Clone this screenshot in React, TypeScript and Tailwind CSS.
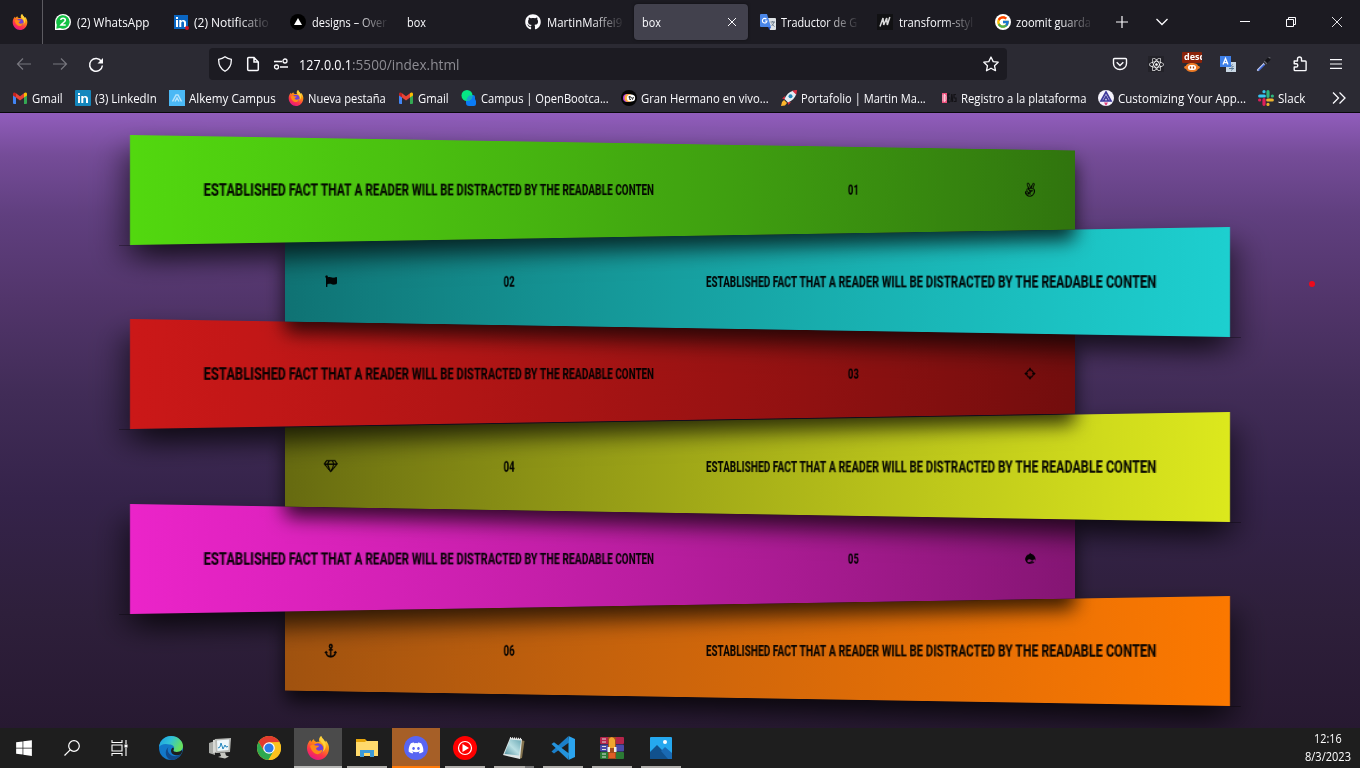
import { useLayoutEffect, useRef, useState, type ReactNode } from "react";
import { FaAnchor, FaAngellist, FaDiscord, FaDrupal, FaFlag, FaGithub, FaReact, FaRegGem, FaWindows } from "react-icons/fa";
import { FcGoogle } from "react-icons/fc";

/* Text squeezed or stretched horizontally to an exact width. */
function Fit({ w, className = "", children }: { w: number; className?: string; children: ReactNode }) {
  const ref = useRef<HTMLSpanElement>(null);
  const [scale, setScale] = useState(1);
  useLayoutEffect(() => {
    if (ref.current && ref.current.offsetWidth) {
      setScale(w / ref.current.offsetWidth);
    }
  }, [w]);
  return (
    <span className="block shrink-0 whitespace-nowrap" style={{ width: w }}>
      <span ref={ref} className={`inline-block origin-left ${className}`} style={{ transform: `scaleX(${scale})` }}>
        {children}
      </span>
    </span>
  );
}

function Firefox({ className = "size-4" }: { className?: string }) {
  return (
    <svg viewBox="0 0 24 24" className={`shrink-0 ${className}`}>
      <defs>
        <linearGradient id="ffx" x1="0.8" y1="0" x2="0.3" y2="1">
          <stop offset="0" stopColor="#fff44f" />
          <stop offset="0.35" stopColor="#ff980e" />
          <stop offset="0.7" stopColor="#ff3647" />
          <stop offset="1" stopColor="#e31587" />
        </linearGradient>
      </defs>
      <path fill="url(#ffx)" d="M1 12C1 8 3 5 4.500 4l.6 2C6 4.500 7 3.500 8 3.200 8 4.500 9 5.500 10.500 6c1-.2 2-.2 3 0C12.500 4 13 1.500 15.200 0c0 2.500 2 3.500 4 6l.7-1.500C22 7 23.300 10 23 13c-.5 6.500-5.500 11-11 11S1 19 1 12z" />
      <circle cx="12" cy="12.500" r="5.300" fill="#7141d8" />
      <path fill="#ff8a16" d="M4 10c2-2 4-1.500 5.500-.5l3.500.3c0 1.500-2.500 1.500-3 2.700.5 2.500 4 2.800 6.500 1C16 18 12 19 9 17.500 6 16 5 13 4 10z" />
      <path fill="#ffd23c" d="M15.200 0c-2 2-1.200 5 .8 7 2.500 2.500 2.500 6 .5 9 4.500-3 4-9 1.200-12.500C16.500 2 15.300 1 15.200 0z" />
    </svg>
  );
}

function Gmail() {
  return (
    <svg viewBox="0 0 16 16" className="size-4 shrink-0">
      <path fill="#4285f4" d="M1 4l3 2v8H2a1 1 0 0 1-1-1z" />
      <path fill="#34a853" d="M12 6l3-2v9a1 1 0 0 1-1 1h-2z" />
      <path fill="#ea4335" d="M4 3.200l4 3 4-3v4.300l-4 3-4-3z" />
      <path fill="#c5221f" d="M1 4c0-1.500 1.700-2 3-.8v4.300L1 5.400z" />
      <path fill="#fbbc04" d="M12 3.200C13.300 2 15 2.500 15 4v1.400l-3 2.100z" />
    </svg>
  );
}

function LinkedIn({ dot = false }: { dot?: boolean }) {
  return (
    <svg viewBox="0 0 16 16" className="size-4 shrink-0">
      <rect x={dot ? 1 : 0} y={dot ? 1 : 0} width={dot ? 14 : 16} height={dot ? 14 : 16} rx={dot ? 0 : 1} fill={dot ? "#0a66c2" : "#1487bd"} />
      <path fill="#fff" d="M3 6h2v7H3zM3 3h2v2H3zM6.300 6h2v1c1-1.600 4.700-1.700 4.700 1.700V13h-2V9c0-2-2.700-2-2.700 0v4h-2z" />
      {dot && <circle cx="14" cy="14" r="2" fill="#d11124" />}
    </svg>
  );
}

function WhatsApp() {
  return (
    <svg viewBox="0 0 16 16" className="size-4 shrink-0">
      <path fill="#fff" d="M0 16V8a8 8 0 1 1 8 8z" />
      <path fill="#12c143" d="M1.300 14.700l.5-4A6.700 6.700 0 1 1 5 14z" />
      <path fill="none" stroke="#fff" strokeWidth="1.600" d="M5.700 6c.3-2.300 4.600-2.300 4.600.2 0 1.600-2.800 2.700-4.300 4.800h4.700" />
    </svg>
  );
}

function Vercel() {
  return (
    <svg viewBox="0 0 16 16" className="size-4 shrink-0">
      <circle cx="8" cy="8" r="8" fill="#000" />
      <path d="M8 4l4 7H4z" fill="#fff" />
    </svg>
  );
}

function Translate() {
  return (
    <svg viewBox="0 0 16 16" className="size-4 shrink-0">
      <path fill="#dfe3e7" d="M7 4h8a1 1 0 0 1 1 1v10a1 1 0 0 1-1 1H10z" />
      <path fill="#4a86e8" d="M1 0h6l4 13H1a1 1 0 0 1-1-1V1a1 1 0 0 1 1-1z" />
      <path fill="#2a56c6" d="M8 13h3l-1.500 3z" />
      <path fill="none" stroke="#fff" strokeWidth="1.100" d="M6.500 5.200A2.300 2.300 0 1 0 7 7H5" />
      <path fill="none" stroke="#6b7b8a" d="M10.500 8H15M12.700 7v1M14 8c-.5 2-1.500 3-2.500 4M11.800 9.500c.8 1.500 1.700 2 2.700 3" />
    </svg>
  );
}

function Mdn() {
  return (
    <svg viewBox="0 0 16 16" className="size-4 shrink-0">
      <rect width="16" height="16" fill="#111113" />
      <path d="M3 12.500l3-8.500.7 7 3-7 .6 7 2.500-8" fill="none" stroke="#d8d8d8" strokeWidth="1.500" />
    </svg>
  );
}

function Alkemy() {
  return (
    <svg viewBox="0 0 16 16" className="size-4 shrink-0">
      <rect width="16" height="16" fill="#4bb8f5" />
      <path d="M3.500 11.500L7 5h2l3.500 6.500M6 11.500L8 8l2 3.500" fill="none" stroke="#b5e3fc" strokeWidth="1.500" />
    </svg>
  );
}

function OpenBootcamp() {
  return (
    <svg viewBox="0 0 16 16" className="size-4 shrink-0">
      <path fill="#0b7bf5" d="M8 5h4a2 2 0 0 1 2 2v2l1 2v3a2 2 0 0 1-2 2H8a3 3 0 0 1-3-3V9z" />
      <circle cx="6" cy="5.500" r="5.500" fill="#06e584" />
      <path fill="#1aa5c5" d="M5.500 9L8 5.500h3.500A5.500 5.500 0 0 1 6 11z" />
    </svg>
  );
}

function GranHermano() {
  return (
    <svg viewBox="0 0 16 16" className="size-4 shrink-0">
      <circle cx="8" cy="8" r="8" fill="#050505" />
      <circle cx="6" cy="8" r="4" fill="#b33fe0" />
      <circle cx="7.500" cy="8" r="4" fill="#ffb03a" />
      <ellipse cx="10" cy="8" rx="4.200" ry="3.500" fill="#fff" />
      <path d="M7.500 7h2.500M8.700 6v3.500h1.300M10.500 7l1 2.500 1-2.500" fill="none" stroke="#222" strokeWidth=".9" />
    </svg>
  );
}

function Rocket() {
  return (
    <svg viewBox="0 0 16 16" className="size-4 shrink-0">
      <path fill="#d42b3c" d="M4 6L1 8.500l3 1zM10 12l-2.500 3-1-3zM11 .800L16 0l-1 5z" />
      <path fill="#e4edf4" d="M3.500 9C5 5 8 1.800 12 .700L15.300 4C14 8 11 11 7 12.500z" />
      <path fill="#dc3146" d="M11.500.900L16 0l-1 4.500z" />
      <circle cx="9.500" cy="6.300" r="2" fill="#2487b8" />
      <path fill="#ffb62b" d="M3 10l3 3-2 2.500L0 16l1-4z" />
    </svg>
  );
}

function Ideas() {
  return (
    <svg viewBox="0 0 16 16" className="size-4 shrink-0">
      <rect x="1" y="3" width="5" height="10" fill="#ec4e7b" />
      <path d="M2 4.500v7M4 4.500h-.500v7c2 0 2-7 0-7" stroke="#fff" strokeWidth=".7" fill="none" />
      <path d="M9 4H7v8h2M7 8h2M10 12l.8-8 1 8M15 4.500h-2V8h2v3.500h-2" stroke="#131216" strokeWidth="1.200" fill="none" />
    </svg>
  );
}

function AppIcon() {
  return (
    <svg viewBox="0 0 16 16" className="size-4 shrink-0">
      <circle cx="8" cy="8" r="8" fill="#f4f2fb" />
      <path d="M3 11L8 2l5 9zM5.500 11L8 6.500l2.500 4.500" fill="none" stroke="#3f3a9c" strokeWidth="1.700" />
      <path d="M6 12.500h4L8 16z" fill="#e23e7b" />
    </svg>
  );
}

function Slack() {
  return (
    <svg viewBox="0 0 16 16" className="size-4 shrink-0" strokeWidth="3.200" strokeLinecap="round">
      <path d="M1.700 6h4.600M6 1.600v.1" stroke="#36c5f0" />
      <path d="M10 1.700v4.600M14.300 6h.1" stroke="#2eb67d" />
      <path d="M9.700 10h4.600M10 14.300v.1" stroke="#ecb22e" />
      <path d="M6 9.700v4.600M1.600 10h.1" stroke="#e01e5a" />
    </svg>
  );
}

type TabData = { icon?: ReactNode; text: string; w: number; fade?: boolean };

const tabs: TabData[] = [
  { icon: <WhatsApp />, text: "(2) WhatsApp", w: 72 },
  { icon: <LinkedIn dot />, text: "(2) Notificatio", w: 75, fade: true },
  { icon: <Vercel />, text: "designs – Over", w: 75, fade: true },
  { text: "box", w: 19 },
  { icon: <FaGithub className="size-4 shrink-0" />, text: "MartinMaffei9", w: 75, fade: true },
];
const tabsAfter: TabData[] = [
  { icon: <Translate />, text: "Traductor de G", w: 76, fade: true },
  { icon: <Mdn />, text: "transform-styl", w: 74, fade: true },
  { icon: <FcGoogle className="size-4 shrink-0 rounded-full bg-white p-px" />, text: "zoomit guarda", w: 75, fade: true },
];

function Tab({ icon, text, w, fade }: TabData) {
  return (
    <div className={`flex h-11 w-[117.5px] shrink-0 items-center ${icon ? "gap-[5.500px] pl-3" : "pl-[11px]"}`}>
      {icon}
      <div className={`pt-[2px] ${fade ? "[mask-image:linear-gradient(to_right,black_58%,transparent_104%)]" : ""}`}>
        <Fit w={w}>{text}</Fit>
      </div>
    </div>
  );
}

const bookmarks: { icon: ReactNode; text: string; w: number; gap: string }[] = [
  { icon: <Gmail />, text: "Gmail", w: 31, gap: "mr-3" },
  { icon: <LinkedIn />, text: "(3) LinkedIn", w: 62, gap: "mr-3" },
  { icon: <Alkemy />, text: "Alkemy Campus", w: 87, gap: "mr-3" },
  { icon: <Firefox />, text: "Nueva pestaña", w: 78, gap: "mr-3" },
  { icon: <Gmail />, text: "Gmail", w: 31, gap: "mr-3" },
  { icon: <OpenBootcamp />, text: "Campus | OpenBootca...", w: 128, gap: "mr-3" },
  { icon: <GranHermano />, text: "Gran Hermano en vivo...", w: 128, gap: "mr-3" },
  { icon: <Rocket />, text: "Portafolio | Martin Ma...", w: 125, gap: "mr-[15px]" },
  { icon: <Ideas />, text: "Registro a la plataforma", w: 125, gap: "mr-3" },
  { icon: <AppIcon />, text: "Customizing Your App...", w: 128, gap: "mr-3" },
  { icon: <Slack />, text: "Slack", w: 27, gap: "" },
];

function Browser() {
  return (
    <header className="h-[113px] shrink-0 border-b border-[#08080a] bg-[#2b2a33] text-xs text-[#fbfbfe]">
      <div className="flex h-11 items-center bg-[#1c1b22]">
        <div className="flex h-11 w-[43px] shrink-0 items-center border-r border-[#5c5b61] pl-3">
          <Firefox />
        </div>
        {tabs.map((t, i) => <Tab key={i} {...t} />)}
        <div className="ml-[3.500px] flex h-9 w-[114px] shrink-0 items-center justify-between rounded bg-[#42414d] pl-2 pr-[11px] shadow-[0_0_3px_rgba(0,0,0,0.5)]">
          <div className="pt-[2px]"><Fit w={19}>box</Fit></div>
          <svg viewBox="0 0 10 10" className="size-[10px]" fill="none" stroke="currentColor"><path d="M1 1l8 8M9 1L1 9" /></svg>
        </div>
        <div className="-ml-[0.500px] flex">{tabsAfter.map((t, i) => <Tab key={i} {...t} />)}</div>
        <svg viewBox="0 0 12 12" className="ml-[15.500px] size-3 shrink-0" fill="none" stroke="currentColor" strokeWidth="1.200"><path d="M6 0v12M0 6h12" /></svg>
        <svg viewBox="0 0 12 8" className="ml-[28.500px] h-2 w-3 shrink-0" fill="none" stroke="currentColor" strokeWidth="1.300"><path d="M.5 1L6 6.500 11.500 1" /></svg>
        <svg viewBox="0 0 10 10" className="ml-[72px] size-[10px] shrink-0" stroke="currentColor"><path d="M0 4.500h10" /></svg>
        <svg viewBox="0 0 10 10" className="ml-9 size-[10px] shrink-0" fill="none" stroke="currentColor"><path d="M.5 2.500h7v7h-7zM2.500 2V.5h7v7H8" /></svg>
        <svg viewBox="0 0 10 10" className="ml-9 size-[10px] shrink-0" fill="none" stroke="currentColor" strokeWidth=".9"><path d="M0 0l10 10M10 0L0 10" /></svg>
      </div>
      <div className="flex h-10 items-center pl-4">
        <svg viewBox="0 0 16 14" className="h-[14px] w-4 text-[#77767e]" fill="none" stroke="currentColor" strokeWidth="1.200"><path d="M15 7H1.500M7 1.500L1.500 7 7 12.500" /></svg>
        <svg viewBox="0 0 16 14" className="ml-5 h-[14px] w-4 text-[#77767e]" fill="none" stroke="currentColor" strokeWidth="1.200"><path d="M1 7h13.500M9 1.500L14.500 7 9 12.500" /></svg>
        <svg viewBox="0 0 16 16" className="ml-5 mt-px size-4" fill="none" stroke="currentColor" strokeWidth="1.500"><path d="M13.500 4.500A6.400 6.400 0 1 0 14.400 8.500" /><path d="M15 1v5.500H9.500z" fill="currentColor" stroke="none" /></svg>
        <div className="ml-[105px] flex h-8 w-[798px] items-center rounded bg-[#1c1b22] pl-2">
          <svg viewBox="0 0 16 16" className="size-4" fill="none" stroke="currentColor" strokeWidth="1.300"><path d="M8 .8C10 2.300 12 3 14.300 3.300c.3 5.700-2 9.700-6.300 12-4.300-2.300-6.600-6.300-6.300-12C4 3 6 2.300 8 .8z" /></svg>
          <svg viewBox="0 0 16 16" className="ml-3 size-4" fill="none" stroke="currentColor" strokeWidth="1.500"><path d="M2.700 2.500a1 1 0 0 1 1-1H9L13.300 6v7.500a1 1 0 0 1-1 1H3.700a1 1 0 0 1-1-1zM9 1.500V6h4.300" /></svg>
          <svg viewBox="0 0 16 12" className="ml-3 h-3 w-4" fill="none" stroke="currentColor" strokeWidth="1.300"><path d="M1 3.500h8M7 9h8" /><circle cx="12" cy="3" r="2" /><circle cx="3.500" cy="9" r="2" /></svg>
          <div className="ml-[10px] flex pt-[2px] text-sm">
            <Fit w={53}>127.0.0.1</Fit>
            <Fit w={107} className="text-[#8d8c93]">:5500/index.html</Fit>
          </div>
          <svg viewBox="0 0 16 16" className="ml-auto mr-2 size-4" fill="none" stroke="currentColor" strokeWidth="1.300" strokeLinejoin="round"><path d="M8 1l2.200 4.600 5 .6-3.700 3.500 1 5L8 12.200l-4.500 2.500 1-5L.8 6.200l5-.6z" /></svg>
        </div>
        <div className="ml-[105px] flex items-center gap-5">
          <svg viewBox="0 0 16 16" className="size-4" fill="none" stroke="currentColor" strokeWidth="1.400"><path d="M2.500 2.500h11a1 1 0 0 1 1 1v4a6.500 6 0 0 1-13 0v-4a1 1 0 0 1 1-1z" /><path d="M4.700 6.300L8 9.500l3.300-3.200" /></svg>
          <span className="flex size-4 items-center justify-center bg-[#232229]"><FaReact className="size-[15px] text-white" /></span>
          <div className="-mx-[2px] mb-[3px] flex w-5 flex-col items-center">
            <span className="h-[11px] w-5 overflow-hidden rounded-[1px] bg-[#8b2209] pl-[2px] text-[9.500px] font-bold leading-[10px] text-white">
              <Fit w={20}>desc</Fit>
            </span>
            <svg viewBox="0 0 20 10" className="h-[10px] w-5" fill="none">
              <path d="M4 3c0-4 12-4 12 0 3 0 2 3 0 3-1 4-11 4-12 0-2 0-3-3 0-3z" fill="#ec7a25" />
              <rect x="6" y="2" width="8" height="5" rx="2.500" fill="#fff" />
              <path d="M8.500 3.500v2M11.500 3.500v2" stroke="#b34a10" strokeWidth="1.300" />
            </svg>
          </div>
          <svg viewBox="0 0 16 16" className="size-4" fill="none"><rect x="6" y="6" width="10" height="10" fill="#c9d7e4" /><rect width="11" height="11" fill="#3f80e8" /><path d="M3 8.500L5.500 2.500 8 8.500M3.800 6.700h3.400" stroke="#fff" strokeWidth="1.300" /><path d="M9 12.500h5M11.500 11c2 1 1 3-.5 3.500M12.500 8.500c-2 1-1 2 1 2" stroke="#5a7894" /></svg>
          <svg viewBox="0 0 16 16" className="size-4" fill="none" strokeLinecap="round"><path d="M2 14l7-7" stroke="#c4cdf0" strokeWidth="2.200" /><path d="M3 14l5-5" stroke="#3762d8" strokeWidth="1.300" /><path d="M9.500 6.500L13 3" stroke="#141418" strokeWidth="3.200" /><path d="M8.500 5.500l2 2M13 1.500l1 .5" stroke="#66666e" strokeWidth="1.300" /></svg>
          <svg viewBox="0 0 16 16" className="size-4" fill="none" stroke="currentColor" strokeWidth="1.400" strokeLinejoin="round"><path d="M5.500 5V3a2 2 0 0 1 4 0v2h3.800a.8.800 0 0 1 .8.800v8a.8.800 0 0 1-.8.800H3a.8.800 0 0 1-.8-.800V11h2a1.500 1.500 0 0 0 0-3.200h-2V5z" /></svg>
          <svg viewBox="0 0 12 10" className="ml-[2px] h-[10px] w-3" stroke="currentColor" strokeWidth="1.100"><path d="M0 .6h12M0 5h12M0 9.400h12" /></svg>
        </div>
      </div>
      <div className="flex h-7 items-center pl-3">
        {bookmarks.map((b, i) => (
          <div key={i} className={`flex items-center gap-1 ${b.gap}`}>
            {b.icon}
            <div className="pt-[2px]"><Fit w={b.w}>{b.text}</Fit></div>
          </div>
        ))}
        <svg viewBox="0 0 14 12" className="ml-[27px] h-3 w-[14px]" fill="none" stroke="currentColor" strokeWidth="1.300"><path d="M1 .5L6.500 6 1 11.500M7.500.5L13 6l-5.500 5.500" /></svg>
      </div>
    </header>
  );
}

function Crosshair() {
  return (
    <svg viewBox="0 0 16 16" className="h-[17px] w-[15px]" preserveAspectRatio="none" fill="currentColor">
      <path d="M8 0l3 3.500H9V5H7V3.500H5zM8 16l3-3.500H9V11H7v1.500H5zM0 8l3.500-3v2H5v2H3.500v2zM16 8l-3.500-3v2H11v2h1.500v2z" />
      <path d="M3.800 5.800l2-2M10.200 3.800l2 2M12.200 10.200l-2 2M5.800 12.200l-2-2" stroke="currentColor" strokeWidth="1.800" />
    </svg>
  );
}

const bars: { n: string; colors: string; icon: ReactNode; z: string }[] = [
  { n: "01", colors: "from-[#52d80f] to-[#30740e]", icon: <FaAngellist className="h-[19px] w-[17px]" />, z: "z-60" },
  { n: "02", colors: "from-[#1dcfcf] to-[#0f7273]", icon: <FaFlag className="size-[16px]" />, z: "z-50" },
  { n: "03", colors: "from-[#cb1818] to-[#720d0d]", icon: <Crosshair />, z: "z-40" },
  { n: "04", colors: "from-[#dce81d] to-[#666a10]", icon: <FaRegGem className="h-[18px] w-[19px]" />, z: "z-30" },
  { n: "05", colors: "from-[#eb24c9] to-[#841573]", icon: <FaDrupal preserveAspectRatio="none" className="h-[18px] w-[16px]" />, z: "z-20" },
  { n: "06", colors: "from-[#fb7800] to-[#a0520f]", icon: <FaAnchor preserveAspectRatio="none" className="h-[19px] w-[17px]" />, z: "z-10" },
];

function Bars() {
  return (
    <main className="relative h-[615px] shrink-0 overflow-hidden bg-[linear-gradient(#915dbc_0px,#754c98_42px,#603f7f_102px,#52356b_185px,#412c57_280px,#35234a_385px,#2e1f3b_500px,#271931_615px)] px-[130px] pt-[22px] font-['Roboto',sans-serif] text-[19px] font-extrabold leading-none text-black/95">
      {bars.map((b, i) => {
        const left = i % 2 === 0;
        return (
          <section key={b.n} className={`relative -mb-[17.800px] flex h-[110px] ${left ? "justify-start" : "justify-end"} ${b.z}`}>
            <div
              className={`flex w-[945px] shrink-0 items-center pb-[2px] shadow-[0_15px_25px_rgba(0,0,0,0.75)] ${b.colors} ${
                left
                  ? "origin-left bg-linear-to-r pl-[54px] [transform:matrix3d(1.3924,0,0,0.00041524,0,1,0,0,0,0,1,0,0,0,0,1)]"
                  : "origin-right flex-row-reverse bg-linear-to-l pr-[54px] [transform:matrix3d(1.3924,0,0,-0.00041524,0,1,0,0,0,0,1,0,0,0,0,1)]"
              }`}
            >
              <Fit w={392}>ESTABLISHED FACT THAT A READER WILL BE DISTRACTED BY THE READABLE CONTEN</Fit>
              <div className={`shrink-0 ${left ? "w-[209.500px]" : "w-[207.500px]"}`} />
              <Fit w={13}>{b.n}</Fit>
              <div className={`shrink-0 ${left ? "w-[205.500px]" : "w-[206.500px]"}`} />
              <div className="flex w-[19px] shrink-0 justify-center">{b.icon}</div>
            </div>
            <i className={`absolute top-[110px] h-px w-[11px] bg-black/30 ${left ? "-left-[11px]" : "-right-[11px]"}`} />
          </section>
        );
      })}
      <i className="absolute left-[1309px] top-[168px] size-[6px] rounded-full bg-[#ee0a1c]" />
    </main>
  );
}

const taskIcons: { icon: ReactNode; cell?: string; bar?: string }[] = [
  { icon: <FaWindows className="size-[18px] text-white" /> },
  {
    icon: <svg viewBox="0 0 16 16" className="-ml-[2px] size-4" fill="none" stroke="#fff" strokeWidth="1.200"><circle cx="10" cy="6" r="5.300" /><path d="M6.200 9.800L.5 15.500" /></svg>,
  },
  {
    icon: <svg viewBox="0 0 17 16" className="-ml-[5px] h-4 w-[17px]" fill="none" stroke="#fff" strokeWidth="1.100"><path d="M1 0v2.500h10V0M1 16v-2.500h10V16M1 5h10v6H1zM15 0v4M15 8v8" /><path d="M13.500 4.500h3v3h-3z" fill="#fff" stroke="none" /></svg>,
  },
  {
    icon: (
      <svg viewBox="0 0 24 24" className="size-6">
        <defs>
          <linearGradient id="edg" x1="0" y1="0" x2="1" y2=".4"><stop offset="0" stopColor="#1b9de2" /><stop offset=".5" stopColor="#30c2d8" /><stop offset="1" stopColor="#67e05e" /></linearGradient>
        </defs>
        <circle cx="12" cy="12" r="12" fill="#1278c9" />
        <path fill="url(#edg)" d="M0 11C1 4 6 0 12 0c7 0 12 5 12 10 0 4-3 6-6.500 6-2.500 0-3.500-1-3-2 2-3-.5-5.500-4-5.500C5 7 1 9 0 11z" />
        <path fill="#114a8b" d="M9.500 11c-2 3 0 8 5 9 3 .5 5.500-.5 7.500-2-2 4-6 6-10 6-5-1-7.500-9-2.500-13z" />
        <path fill="#1e1e1e" d="M14.500 14c-.5 1 .5 2 3 2 2.500 0 4.500-.7 5.500-2 .3 2-.5 3.500-1.500 4.500-3 1.500-9 1-9.500-3.500 0-2 1-3 2-3.500 1 .5 1 1.500.5 2.500z" />
      </svg>
    ),
  },
  {
    icon: (
      <svg viewBox="0 0 24 22" className="h-[22px] w-6">
        <path fill="#a9aba7" d="M1 6l6-2v14l-6-2z" /><path fill="#d7d8d4" d="M5 3l7-1v13l-7 1z" />
        <path fill="#b9bbb7" d="M7 2l16-1-1 14-14 1z" /><path fill="#eef7fb" d="M9 3.500l12-1-.5 10.500-11 1z" />
        <path d="M10 11l2-1 1-4 2 6 2-4 1 2 2-.5" fill="none" stroke="#2386bd" />
        <path fill="#c5c6c0" d="M12 16l5-.5 1 3 3 1-4 2-7-1.500 3-1z" />
      </svg>
    ),
  },
  {
    icon: (
      <svg viewBox="0 0 24 24" className="size-6">
        <circle cx="12" cy="12" r="12" fill="#fcc31e" />
        <path fill="#e33b2e" d="M1.600 6A12 12 0 0 1 22.400 6L12 6.500 7 15z" />
        <path fill="#2da94f" d="M1.600 6A12 12 0 0 0 11.500 24L17 15l-10 0z" />
        <path fill="#fcc31e" d="M12 6.500h10.700A12 12 0 0 1 11.500 24L17 14.500z" />
        <circle cx="12" cy="12" r="5.800" fill="#fff" /><circle cx="12" cy="12" r="4.600" fill="#2e7be9" />
      </svg>
    ),
  },
  { icon: <Firefox className="size-6" />, cell: "w-12 bg-[#4b4b4b]", bar: "w-12 bg-[#b9b9b7]" },
  {
    icon: (
      <svg viewBox="0 0 22 20" className="h-5 w-[22px]">
        <path fill="#e5a50b" d="M0 1h9l2 2h10v4H0z" /><path fill="#ffda6c" d="M0 4h9l1-1h12v15H0z" />
        <path fill="#3c9ad8" d="M4 12h14v7h-4v-4H8v4H4z" />
      </svg>
    ),
    bar: "w-10 bg-[#b0aeab]",
  },
  {
    icon: <span className="flex size-6 items-center justify-center rounded-full bg-[#5865f2]"><FaDiscord className="size-4 text-white" /></span>,
    cell: "w-12 bg-[#a65f27]",
    bar: "w-12 bg-[#ff7b0a]",
  },
  {
    icon: <svg viewBox="0 0 24 24" className="size-6"><circle cx="12" cy="12" r="12" fill="#f00" /><circle cx="12" cy="12" r="6.500" fill="none" stroke="#fff" strokeWidth="1.200" /><path d="M9.500 8l6.500 4-6.500 4z" fill="#fff" /></svg>,
    bar: "w-10 bg-[#b0aeab]",
  },
  {
    icon: (
      <svg viewBox="0 0 24 24" className="size-6">
        <defs>
          <linearGradient id="pad" x1="1" y1="0" x2="0" y2="1"><stop offset="0" stopColor="#6ba9b5" /><stop offset=".5" stopColor="#b9dfe3" /><stop offset="1" stopColor="#4f8e9c" /></linearGradient>
        </defs>
        <path fill="#84734e" d="M19 4l3.500 1L20 22l-3 1z" /><path fill="#dfe6e6" d="M8 2l12 1-2 20L1 19z" /><path fill="url(#pad)" d="M8 3.500l11 1-2 15L2.500 18z" /><path d="M8 2l12 1" stroke="#e8e8e8" strokeDasharray="1 1" strokeWidth="2" />
      </svg>
    ),
    bar: "w-10 bg-[linear-gradient(to_right,#b0aeab_31px,#777_31px)]",
  },
  {
    icon: (
      <svg viewBox="0 0 24 24" className="size-6">
        <path fill="#1b7fc9" d="M.5 15.500L17 .5l1 6L3 17.500z" />
        <path fill="#2493dc" d="M.5 8L3 6.300 18 17.500l-1 6z" />
        <path fill="#2ba4ee" d="M17.500 0L24 3v18l-6.500 3z" />
      </svg>
    ),
    bar: "w-10 bg-[#b0aeab]",
  },
  {
    icon: (
      <svg viewBox="0 0 24 22" className="h-[22px] w-6">
        <rect width="24" height="7" rx="1" fill="#b5254a" /><rect y="7.500" width="24" height="7" rx="1" fill="#4b49a8" /><rect y="15" width="24" height="7" rx="1" fill="#2b7a34" />
        <path d="M2 2h4M2 5h4M2 9.500h4M2 12.500h4M2 17h4M2 20h4" stroke="#ddd" /><path fill="#a34c1f" d="M8 0h8v22H8z" />
        <path fill="#f0a62f" d="M9 2c2-3 5-2 6 1v8H9z" /><path fill="#f0efe8" d="M7.500 10H10v5H7.500zM14 10h2.500v5H14z" /><path fill="#e05d25" d="M9 16h6v5H9z" />
      </svg>
    ),
    bar: "w-10 bg-[#b0aeab]",
  },
  {
    icon: (
      <svg viewBox="0 0 22 22" className="size-[22px]">
        <rect width="22" height="22" rx="1" fill="#25a8ef" /><path fill="#11518d" d="M0 15l7-7 14 14H0z" /><path fill="#1a6ab3" d="M11 14l4-4 7 6v6h-4z" /><circle cx="15" cy="5" r="2" fill="#fff" />
      </svg>
    ),
    bar: "w-10 bg-[#b0aeab]",
  },
];

function Taskbar() {
  return (
    <footer className="flex h-10 shrink-0 justify-between bg-[#1e1e1e]">
      <div className="flex gap-px">
        {taskIcons.map((t, i) => (
          <div key={i} className={`flex h-10 flex-col items-center ${t.cell ?? "w-12"}`}>
            <div className="flex h-[38px] items-center pt-[2px]">{t.icon}</div>
            {t.bar && <div className={`h-[2px] ${t.bar}`} />}
          </div>
        ))}
      </div>
      <div className="flex flex-col items-end pr-[9px] pt-[2px] text-xs leading-[18px] text-white">
        <div className="pr-[9px]"><Fit w={28}>12:16</Fit></div>
        <Fit w={46}>8/3/2023</Fit>
      </div>
    </footer>
  );
}

export default function App() {
  return (
    <div className="flex h-[768px] w-[1360px] flex-col overflow-hidden bg-black font-['Open_Sans','Noto_Sans',sans-serif]">
      <Browser />
      <Bars />
      <Taskbar />
    </div>
  );
}
